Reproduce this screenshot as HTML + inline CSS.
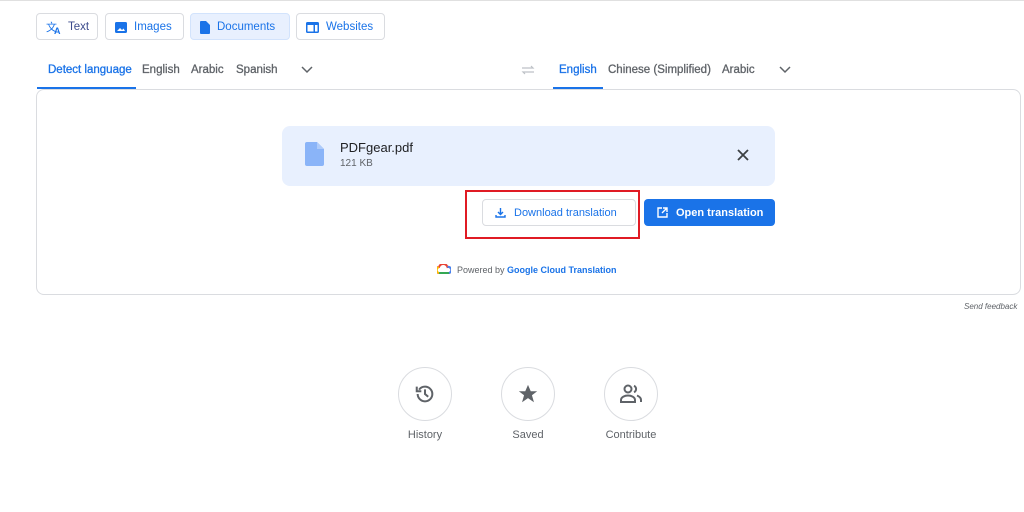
<!DOCTYPE html>
<html><head><style>
body{margin:0;width:1024px;height:512px;background:#fff;font-family:"Liberation Sans",sans-serif;position:relative;overflow:hidden}
.a{position:absolute}
.btn{position:absolute;top:13px;height:27px;border:1px solid #dadce0;border-radius:4px;box-sizing:border-box;font-size:11.5px;color:#1a73e8;display:flex;align-items:center;padding-left:9px;padding-top:1px}
.btn svg{margin-right:7px}
.tab{position:absolute;top:64px;font-size:11.5px;color:#5f6368;font-weight:normal;-webkit-text-stroke:0.3px currentColor}
.circ{position:absolute;top:367px;width:54px;height:54px;border:1px solid #dadce0;border-radius:50%;box-sizing:border-box;display:flex;align-items:center;justify-content:center}
.lbl{position:absolute;top:429px;font-size:11px;color:#5f6368;width:80px;text-align:center}
</style></head><body>
<div class="a" style="left:0;top:0;width:1024px;height:1px;background:#e0e0e0"></div>
<div class="btn" style="left:36px;width:62px;color:#3c4b8c"><svg width="15" height="13" viewBox="0 0 15 13"><text x="0" y="10" font-size="11" fill="#1a73e8" font-family="Liberation Sans">文</text><text x="8" y="13" font-size="9" fill="#1a73e8" font-weight="bold">A</text></svg>Text</div>
<div class="btn" style="left:105px;width:79px"><svg width="12" height="11"><rect width="12" height="11" rx="1.5" fill="#1a73e8"/><path d="M2 9l3-3 2 2 1.5-1.5L10 9z" fill="#fff"/></svg>Images</div>
<div class="btn" style="left:190px;width:100px;background:#e8f0fe;border-color:#d2e3fc"><svg width="10" height="13"><path d="M0 1a1 1 0 011-1h5l4 4v8a1 1 0 01-1 1H1a1 1 0 01-1-1z" fill="#1a73e8"/></svg>Documents</div>
<div class="btn" style="left:296px;width:89px"><svg width="13" height="11"><rect width="13" height="11" rx="1.5" fill="#1a73e8"/><rect x="1.5" y="3" width="6" height="6.5" fill="#fff"/><rect x="9" y="3" width="2.5" height="6.5" fill="#fff"/></svg>Websites</div>
<div class="tab" style="left:48px;color:#1a73e8">Detect language</div>
<div class="a" style="left:37px;top:87px;width:99px;height:2px;background:#1a73e8"></div>
<div class="tab" style="left:142px">English</div>
<div class="tab" style="left:191px">Arabic</div>
<div class="tab" style="left:236px">Spanish</div>
<svg class="a" style="left:301px;top:66px" width="12" height="8"><path d="M1 1l5 5 5-5" stroke="#5f6368" stroke-width="1.5" fill="none"/></svg>
<svg class="a" style="left:521px;top:65px" width="14" height="10"><path d="M1 3h11l-2-2M13 7H2l2 2" stroke="#bdc1c6" stroke-width="1.2" fill="none"/></svg>
<div class="tab" style="left:559px;color:#1a73e8">English</div>
<div class="a" style="left:553px;top:87px;width:50px;height:2px;background:#1a73e8"></div>
<div class="tab" style="left:608px">Chinese (Simplified)</div>
<div class="tab" style="left:722px">Arabic</div>
<svg class="a" style="left:779px;top:66px" width="12" height="8"><path d="M1 1l5 5 5-5" stroke="#5f6368" stroke-width="1.5" fill="none"/></svg>
<div class="a" style="left:36px;top:89px;width:985px;height:206px;border:1px solid #dadce0;border-radius:8px;box-sizing:border-box"></div>
<div class="a" style="left:282px;top:126px;width:493px;height:60px;background:#e8f0fe;border-radius:8px"></div>
<svg class="a" style="left:305px;top:142px" width="19" height="24"><path d="M0 2a2 2 0 012-2h10l7 7v15a2 2 0 01-2 2H2a2 2 0 01-2-2z" fill="#8ab4f8"/><path d="M12 0v7h7" fill="#aecbfa"/></svg>
<div class="a" style="left:340px;top:140px;font-size:13px;color:#202124">PDFgear.pdf</div>
<div class="a" style="left:340px;top:158px;font-size:10px;color:#5f6368">121 KB</div>
<svg class="a" style="left:737px;top:149px" width="12" height="12"><path d="M1 1l10 10M11 1L1 11" stroke="#3c4043" stroke-width="1.8"/></svg>
<div class="a" style="left:465px;top:190px;width:175px;height:49px;border:2px solid #e01b24;box-sizing:border-box"></div>
<div class="a" style="left:482px;top:199px;width:154px;height:27px;border:1px solid #dadce0;border-radius:4px;box-sizing:border-box;font-size:11px;color:#1a73e8;display:flex;align-items:center;padding-left:12px"><svg width="11" height="11" style="margin-right:8px"><path d="M5.5 1v6M3 5l2.5 2.5L8 5M1 8v2h9V8" stroke="#1a73e8" stroke-width="1.4" fill="none"/></svg>Download translation</div>
<div class="a" style="left:644px;top:199px;width:131px;height:27px;background:#1a73e8;border-radius:4px;font-size:11px;color:#fff;font-weight:bold;display:flex;align-items:center;padding-left:13px;box-sizing:border-box"><svg width="11" height="11" style="margin-right:8px"><path d="M5 1H1v9h9V6M6 1h4v4M10 1L5 6" stroke="#fff" stroke-width="1.4" fill="none"/></svg>Open translation</div>
<svg class="a" style="left:437px;top:264px" width="14" height="10"><path d="M2 9a3 3 0 010-6 4.5 4.5 0 018.5 0A3 3 0 0112 9z" fill="none" stroke="#ea4335" stroke-width="2"/><path d="M2 9h10" stroke="#34a853" stroke-width="2"/><path d="M2 3.2a3 3 0 000 5.8" stroke="#fbbc04" stroke-width="2" fill="none"/><path d="M10.5 3a3 3 0 011.5 6" stroke="#4285f4" stroke-width="2" fill="none"/></svg>
<div class="a" style="left:457px;top:265px;font-size:9px;color:#5f6368">Powered by <span style="color:#1a73e8;font-weight:bold">Google Cloud Translation</span></div>
<div class="a" style="left:964px;top:302px;font-size:8px;color:#5f6368;font-style:italic">Send feedback</div>
<div class="circ" style="left:398px"><svg width="22" height="22" viewBox="0 0 24 24"><path d="M4 12a8 8 0 108-8 8 8 0 00-6.5 3.3" stroke="#5f6368" stroke-width="2.2" fill="none"/><path d="M3 4v5h5" stroke="#5f6368" stroke-width="2.2" fill="none"/><path d="M12 7v5l3.5 3" stroke="#5f6368" stroke-width="2.2" fill="none"/></svg></div>
<div class="circ" style="left:501px"><svg width="22" height="22" viewBox="0 0 24 24"><path d="M12 2l3 7h7l-5.7 4.3L18.5 21 12 16.5 5.5 21l2.2-7.7L2 9h7z" fill="#5f6368"/></svg></div>
<div class="circ" style="left:604px"><svg width="24" height="22" viewBox="0 0 24 22"><circle cx="9" cy="6" r="3.5" stroke="#5f6368" stroke-width="2" fill="none"/><path d="M2 19v-2c0-3 4-4.5 7-4.5s7 1.5 7 4.5v2z" stroke="#5f6368" stroke-width="2" fill="none"/><path d="M15 2.8a3.5 3.5 0 010 6.4M18 12.5c2 .8 4 2 4 4.5v2" stroke="#5f6368" stroke-width="2" fill="none"/></svg></div>
<div class="lbl" style="left:385px">History</div>
<div class="lbl" style="left:488px">Saved</div>
<div class="lbl" style="left:591px">Contribute</div>
</body></html>
